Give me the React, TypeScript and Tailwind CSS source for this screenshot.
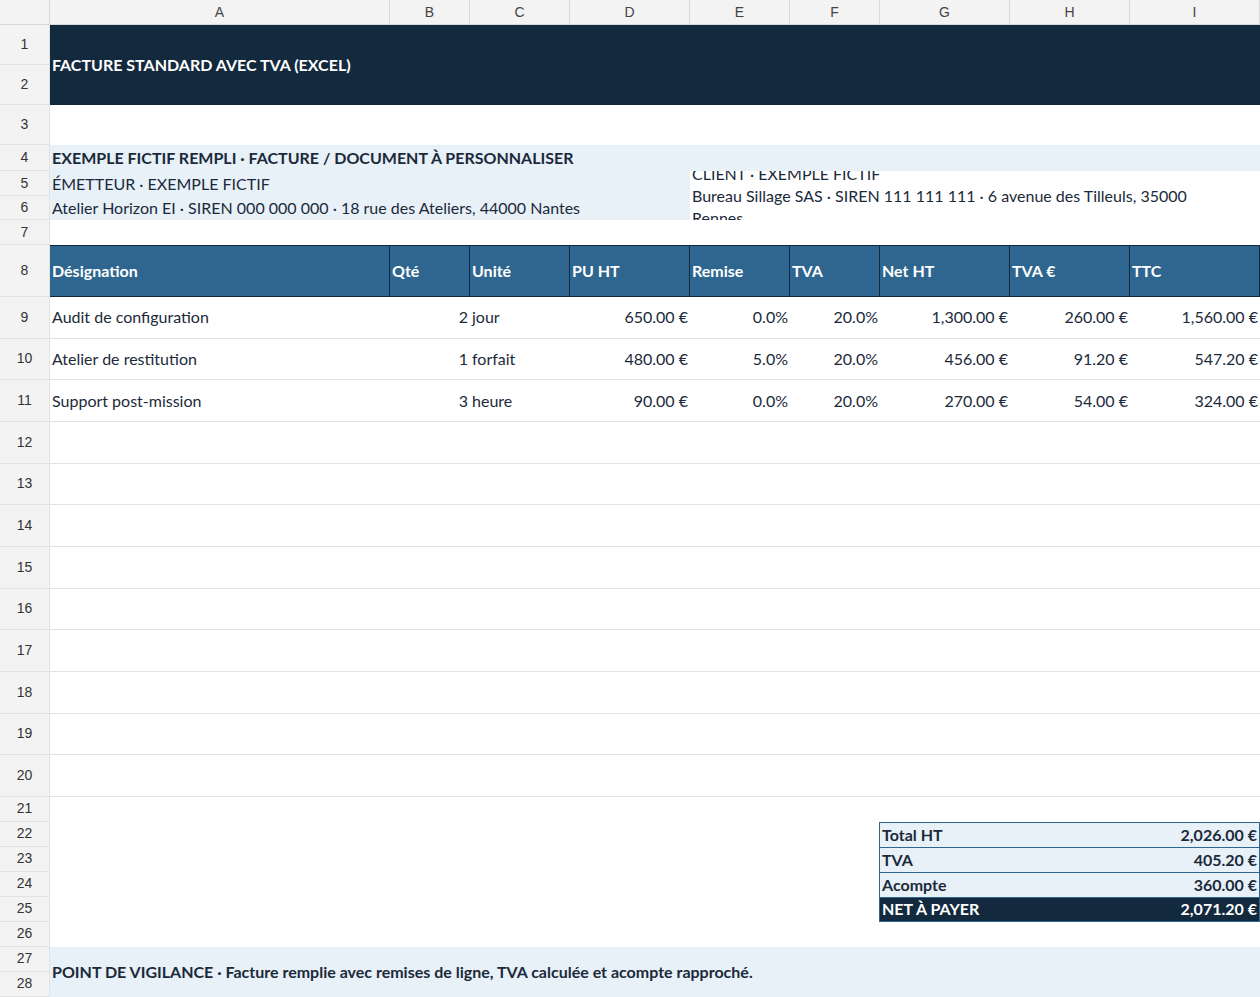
const cols = [
  { l: "A", w: 340 },
  { l: "B", w: 80 },
  { l: "C", w: 100 },
  { l: "D", w: 120 },
  { l: "E", w: 100 },
  { l: "F", w: 90 },
  { l: "G", w: 130 },
  { l: "H", w: 120 },
  { l: "I", w: 130 },
];

const heads = ["Désignation", "Qté", "Unité", "PU HT", "Remise", "TVA", "Net HT", "TVA €", "TTC"];

const lines = [
  ["Audit de configuration", "2", "jour", "650.00 €", "0.0%", "20.0%", "1,300.00 €", "260.00 €", "1,560.00 €"],
  ["Atelier de restitution", "1", "forfait", "480.00 €", "5.0%", "20.0%", "456.00 €", "91.20 €", "547.20 €"],
  ["Support post-mission", "3", "heure", "90.00 €", "0.0%", "20.0%", "270.00 €", "54.00 €", "324.00 €"],
];

function Num({ n, h }: { n: number | string; h: string }) {
  return (
    <div className={`w-[50px] shrink-0 ${h} bg-[#f3f3f3] border-b border-r border-[#e2e2e2] flex items-center justify-center text-[14px] text-[#333] font-[Liberation_Sans,sans-serif]`}>
      {n}
    </div>
  );
}

export default function App() {
  return (
    <div className="w-[1260px] h-[997px] overflow-hidden bg-white font-[Lato,sans-serif] text-[16px] text-[#1b2a3a]">
      {/* column letters */}
      <div className="flex h-[25px]">
        <div className="w-[50px] bg-[#f3f3f3] border-b border-r border-[#d8d8d8]" />
        {cols.map((c) => (
          <div key={c.l} style={{ width: c.w }} className="bg-[#f3f3f3] border-b border-r border-[#d8d8d8] flex items-center justify-center text-[14px] text-[#444] font-[Liberation_Sans,sans-serif]">
            {c.l}
          </div>
        ))}
      </div>

      {/* title rows 1-2 */}
      <div className="flex">
        <div className="flex flex-col">
          <Num n={1} h="h-[40px]" />
          <Num n={2} h="h-[40px]" />
        </div>
        <div className="flex-1 bg-[#13293d] text-white font-bold text-[16px] flex items-center pl-[2px]">
          FACTURE STANDARD AVEC TVA (EXCEL)
        </div>
      </div>

      <div className="flex">
        <Num n={3} h="h-[40px]" />
        <div className="flex-1" />
      </div>

      <div className="flex">
        <Num n={4} h="h-[26px]" />
        <div className="flex-1 bg-[#e8f0f8] font-bold flex items-center pl-[2px]">
          EXEMPLE FICTIF REMPLI · FACTURE / DOCUMENT À PERSONNALISER
        </div>
      </div>

      <div className="flex">
        <div className="flex flex-col">
          <Num n={5} h="h-[25px]" />
          <Num n={6} h="h-[24px]" />
        </div>
        <div className="w-[640px] bg-[#e8f0f8] flex flex-col pl-[2px]">
          <div className="h-[25px] flex items-center">ÉMETTEUR · EXEMPLE FICTIF</div>
          <div className="h-[24px] flex items-center">Atelier Horizon EI · SIREN 000 000 000 · 18 rue des Ateliers, 44000 Nantes</div>
        </div>
        <div className="w-[570px] h-[49px] overflow-hidden flex items-center pl-[2px] pr-[40px]">
          <div className="leading-[22px]">
            CLIENT · EXEMPLE FICTIF<br />Bureau Sillage SAS · SIREN 111 111 111 · 6 avenue des Tilleuls, 35000 Rennes
          </div>
        </div>
      </div>

      <div className="flex">
        <Num n={7} h="h-[25px]" />
        <div className="flex-1" />
      </div>

      {/* table header */}
      <div className="flex">
        <Num n={8} h="h-[52px]" />
        {heads.map((h, i) => (
          <div key={h} style={{ width: cols[i].w }} className="h-[52px] bg-[#2e6690] border border-l-0 border-[#13293d] first:border-l text-white font-bold flex items-center pl-[2px]">
            {h}
          </div>
        ))}
      </div>

      {Array.from({ length: 12 }).map((_, r) => (
        <div key={r} className="flex">
          <Num n={9 + r} h="h-[41.67px]" />
          {cols.map((c, i) => {
            const v = lines[r]?.[i] ?? "";
            return (
              <div key={c.l} style={{ width: c.w }} className={`h-[41.67px] border-b border-[#e2e2e2] flex items-center px-[2px] whitespace-nowrap ${i === 0 || i === 2 ? "" : "justify-end"}`}>
                {v}
              </div>
            );
          })}
        </div>
      ))}

      <div className="flex">
        <Num n={21} h="h-[25px]" />
        <div className="flex-1" />
      </div>

      <div className="flex">
        <div className="flex flex-col">
          <Num n={22} h="h-[25px]" />
          <Num n={23} h="h-[25px]" />
          <Num n={24} h="h-[25px]" />
          <Num n={25} h="h-[25px]" />
        </div>
        <div className="w-[829px]" />
        <div className="w-[381px] border border-[#2e6690] font-bold text-[16px] flex flex-col">
          {[
            ["Total HT", "2,026.00 €"],
            ["TVA", "405.20 €"],
            ["Acompte", "360.00 €"],
          ].map(([a, b]) => (
            <div key={a} className="h-[25px] bg-[#e8f0f8] border-b border-[#2e6690] flex items-center justify-between px-[2px]">
              <span>{a}</span>
              <span>{b}</span>
            </div>
          ))}
          <div className="h-[23px] bg-[#13293d] text-white flex items-center justify-between px-[2px]">
            <span>NET À PAYER</span>
            <span>2,071.20 €</span>
          </div>
        </div>
      </div>

      <div className="flex">
        <Num n={26} h="h-[25px]" />
        <div className="flex-1" />
      </div>

      <div className="flex">
        <div className="flex flex-col">
          <Num n={27} h="h-[25px]" />
          <Num n={28} h="h-[25px]" />
        </div>
        <div className="flex-1 bg-[#e8f0f8] font-bold flex items-center pl-[2px]">
          POINT DE VIGILANCE · Facture remplie avec remises de ligne, TVA calculée et acompte rapproché.
        </div>
      </div>
    </div>
  );
}
